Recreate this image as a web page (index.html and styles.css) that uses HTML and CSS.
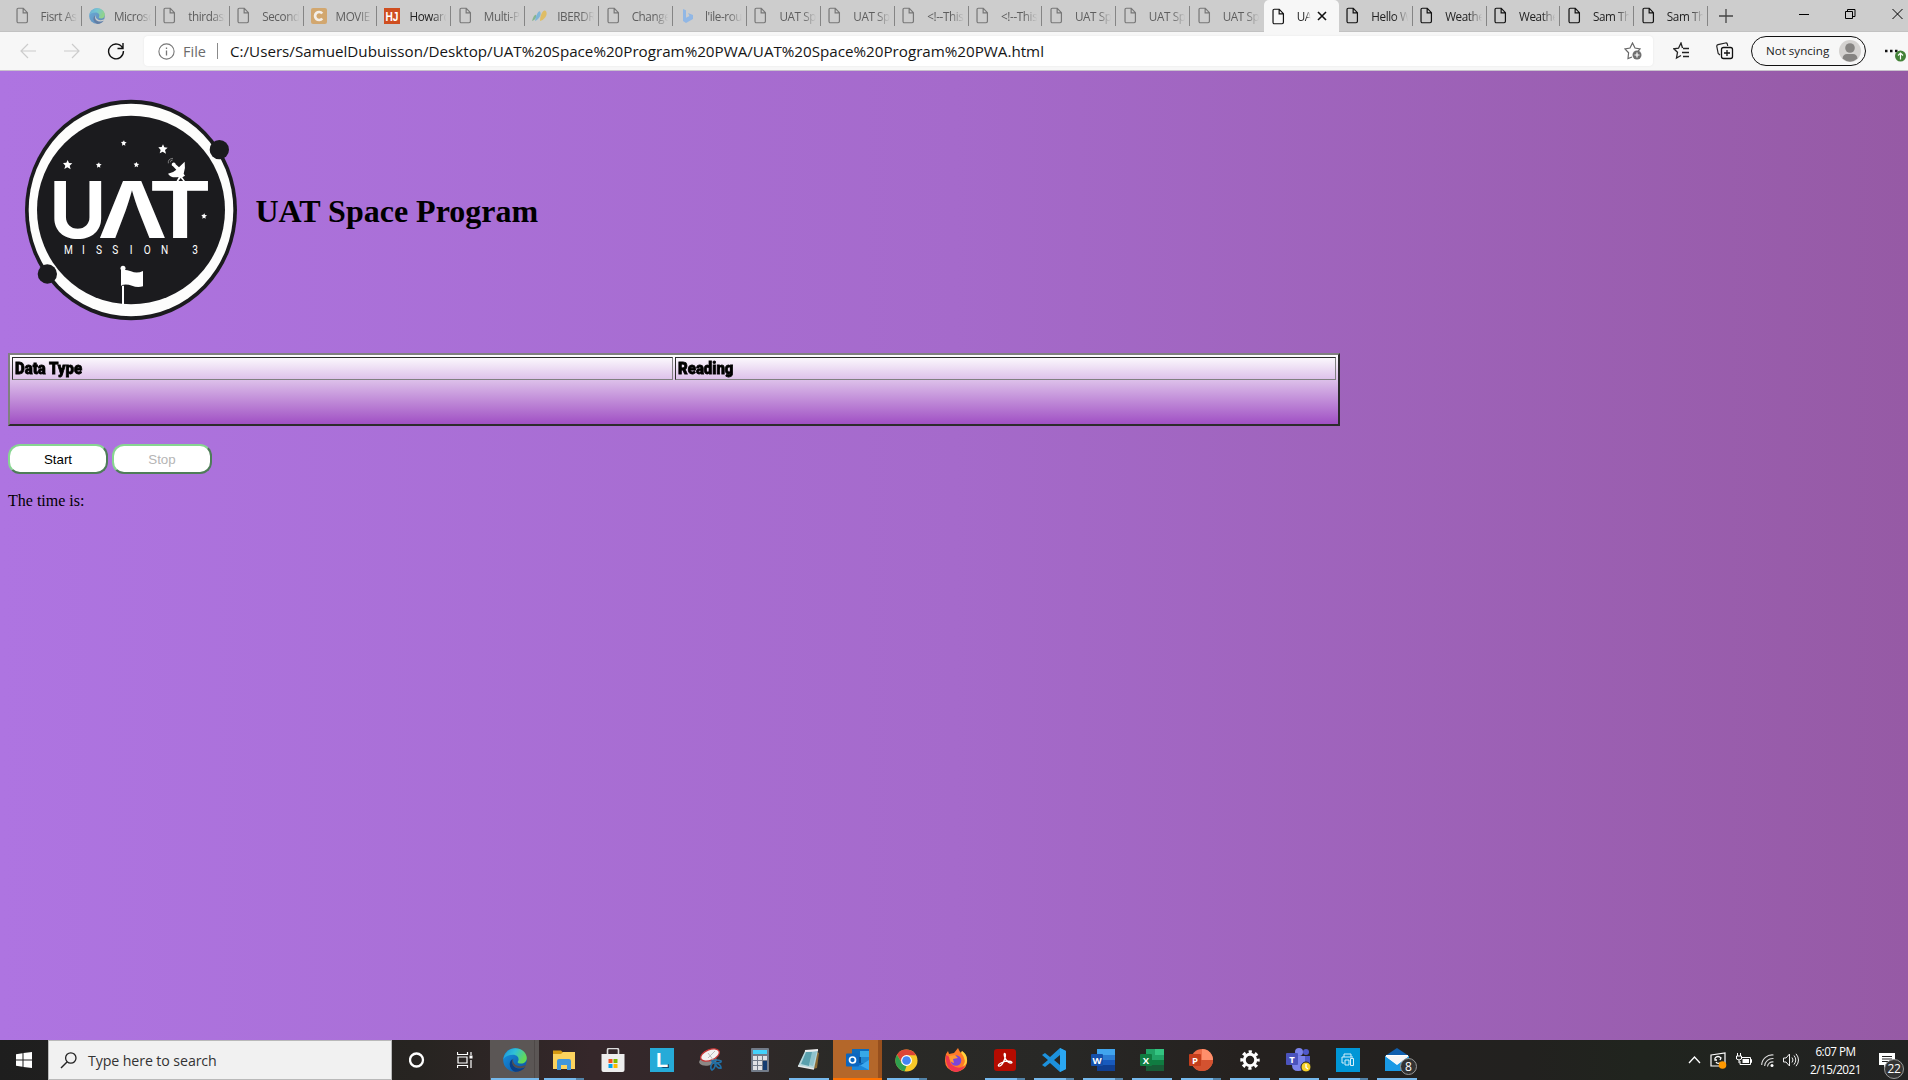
FILE: index.html
```html
<!DOCTYPE html>
<html lang="en">
<head>
<meta charset="utf-8">
<title>UAT Space Program</title>
<link rel="stylesheet" href="styles.css">
</head>
<body>
<svg class="defs" width="0" height="0">
  <defs>
    <symbol id="doc" viewBox="0 0 14 18"><path d="M2.500 1.200h5.300l4.500 4.700v9.400q0 1.500-1.500 1.500H2.600q-1.500 0-1.500-1.500V2.700q0-1.500 1.400-1.500zM7.700 1.400v4.800h4.500" fill="none" stroke="currentColor" stroke-width="1.300"/></symbol>
    <linearGradient id="edgeA" x1="0" y1="0" x2="1" y2=".4"><stop offset="0" stop-color="#1a8fdc"/><stop offset=".5" stop-color="#2fc0d8"/><stop offset="1" stop-color="#63d957"/></linearGradient>
    <linearGradient id="edgeB" x1="0" y1="0" x2="1" y2="1"><stop offset="0" stop-color="#1795e4"/><stop offset="1" stop-color="#0d509f"/></linearGradient>
    <symbol id="edge" viewBox="0 0 24 24">
      <circle cx="12" cy="12" r="11.800" fill="url(#edgeB)"/>
      <path d="M.3 11.500C1.300 4.500 6.300.2 12.200.2 19 .2 23.800 5.200 23.800 10c0 3.400-2.500 5.600-5.700 5.600-2.400 0-4-1-3.200-2 1.800-2.800 0-6.800-5-6.800-4.700 0-8.500 1.900-9.600 4.700z" fill="url(#edgeA)"/>
      <path d="M9.600 11c-1.400 5.500 2.500 10 7.800 9.600 2.300-.2 4.100-1 5-1.800-2.300 3.500-6.400 5.200-10.400 5C6.500 21.500 4.600 14 9.600 11z" fill="#0b3f86"/>
      <path d="M10.500 10.500c-1.600 3.500 1.500 7.700 7 7.700 2.600 0 4.500-1 5.300-1.400-.3 1-.8 1.800-1.300 2.400-5.500 2.300-12.300.3-12.400-5 0-1.500.6-2.800 1.400-3.700z" class="gap"/>
    </symbol>
  </defs>
</svg>

<header class="browser">
  <div class="tabs">
    <div class="tab dim"><svg class="fav"><use href="#doc"/></svg><span>Fisrt Assignment</span></div>
    <div class="tab dim"><svg class="fav sq faded"><use href="#edge"/></svg><span>Microsoft</span></div>
    <div class="tab dim"><svg class="fav"><use href="#doc"/></svg><span>thirdassign</span></div>
    <div class="tab dim"><svg class="fav"><use href="#doc"/></svg><span>Second Page</span></div>
    <div class="tab dim"><svg class="fav sq" viewBox="0 0 16 16"><rect width="16" height="16" rx="2" fill="#d2a76f"/><path d="M11.200 5.500A4 4 0 1 0 11.200 10.500" fill="none" stroke="#f3eee8" stroke-width="2.700"/></svg><span>MOVIE TIME</span></div>
    <div class="tab"><svg class="fav sq" viewBox="0 0 16 16"><rect width="16" height="16" fill="#cf4e20"/><text x="1.500" y="12.500" textLength="13" lengthAdjust="spacingAndGlyphs" class="hj">HJ</text></svg><span>Howard J</span></div>
    <div class="tab dim"><svg class="fav"><use href="#doc"/></svg><span>Multi-Platform</span></div>
    <div class="tab dim"><svg class="fav sq" viewBox="0 0 16 16"><path d="M0 13C1 9 3 6 4 7c1 2-1 5-4 6z" fill="#86b58f"/><path d="M3 13C4 6 7 2 8 3.500 10 7 7 11 3 13z" fill="#7eb6d8"/><path d="M8 13C8 7 11 2 13 2.500 17 5 13 12 8 13z" fill="#dfbd65"/></svg><span>IBERDROLA</span></div>
    <div class="tab dim"><svg class="fav"><use href="#doc"/></svg><span>Change log</span></div>
    <div class="tab dim"><svg class="fav sq" viewBox="0 0 16 16"><path d="M3 1l3 1.200v7.600L9.500 8 8 5l5 2v4l-7 4-3-2z" fill="#91b7e5"/></svg><span>l'ile-rousse</span></div>
    <div class="tab dim"><svg class="fav"><use href="#doc"/></svg><span>UAT Space</span></div>
    <div class="tab dim"><svg class="fav"><use href="#doc"/></svg><span>UAT Space</span></div>
    <div class="tab dim"><svg class="fav"><use href="#doc"/></svg><span>&lt;!--This is</span></div>
    <div class="tab dim"><svg class="fav"><use href="#doc"/></svg><span>&lt;!--This is</span></div>
    <div class="tab dim"><svg class="fav"><use href="#doc"/></svg><span>UAT Space</span></div>
    <div class="tab dim"><svg class="fav"><use href="#doc"/></svg><span>UAT Space</span></div>
    <div class="tab dim last"><svg class="fav"><use href="#doc"/></svg><span>UAT Space</span></div>
    <div class="tab active"><svg class="fav"><use href="#doc"/></svg><span>UAT</span><svg class="x" viewBox="0 0 10 10"><path d="M1 1l8 8M9 1L1 9" stroke="#111" stroke-width="1.600"/></svg></div>
    <div class="tab"><svg class="fav"><use href="#doc"/></svg><span>Hello World</span></div>
    <div class="tab"><svg class="fav"><use href="#doc"/></svg><span>Weather App</span></div>
    <div class="tab"><svg class="fav"><use href="#doc"/></svg><span>Weather App</span></div>
    <div class="tab"><svg class="fav"><use href="#doc"/></svg><span>Sam The</span></div>
    <div class="tab"><svg class="fav"><use href="#doc"/></svg><span>Sam The</span></div>
    <svg class="plus" viewBox="0 0 14 14"><path d="M7 0v14M0 7h14" stroke="#444" stroke-width="1.300"/></svg>
    <div class="window-buttons">
      <svg width="10" height="12" viewBox="0 0 10 12"><path d="M0 6.500h10" stroke="#000"/></svg>
      <svg width="11" height="12" viewBox="0 0 11 12"><path d="M.5 3.500h7v7h-7zM2.500 3.500v-2h7.500v7H7.500" fill="none" stroke="#000"/></svg>
      <svg width="11" height="12" viewBox="0 0 11 12"><path d="M.5 1l10 10M10.500 1l-10 10" stroke="#000"/></svg>
    </div>
  </div>
  <div class="toolbar">
    <div class="nav">
      <svg width="16" height="16" viewBox="0 0 16 16"><path d="M8 1L1 8l7 7M1 8h15" fill="none" stroke="#ccc" stroke-width="1.200"/></svg>
      <svg width="16" height="16" viewBox="0 0 16 16"><path d="M8 1l7 7-7 7M15 8H0" fill="none" stroke="#ccc" stroke-width="1.200"/></svg>
      <svg width="18" height="18" viewBox="0 0 18 18"><path d="M15.800 6.500A7.400 7.400 0 1 0 16.400 9M16 1v5.500h-5.500" fill="none" stroke="#111" stroke-width="1.400"/></svg>
    </div>
    <div class="address">
      <svg width="17" height="17" viewBox="0 0 17 17"><circle cx="8.500" cy="8.500" r="7.600" fill="none" stroke="#777" stroke-width="1.100"/><path d="M8.500 7.500v5M8.500 4.500v1.400" stroke="#777" stroke-width="1.300"/></svg>
      <span class="scheme">File</span><i></i>
      <span class="url">C:/Users/SamuelDubuisson/Desktop/UAT%20Space%20Program%20PWA/UAT%20Space%20Program%20PWA.html</span>
      <svg class="star" width="18" height="18" viewBox="0 0 18 18"><path d="M8 15l-4 1.500.600-5.700L1 7l5-1 2.500-5L11 6l5 1-2 2.300" fill="none" stroke="#666" stroke-width="1.200"/><circle cx="13" cy="13" r="4.500" fill="#707070"/><path d="M13 10.500v5M10.500 13h5" stroke="#fff" stroke-width="1.200"/></svg>
    </div>
    <div class="actions">
      <svg width="18" height="18" viewBox="0 0 18 18"><path d="M9.500 6L8 1 5.500 6.200.8 6.800 4.500 10.300 3.500 16 8 13.500M10 6.500h6M9 10.500h7M10 14.500h6" fill="none" stroke="#222" stroke-width="1.300"/></svg>
      <svg width="18" height="18" viewBox="0 0 18 18"><path d="M4 13L2.200 11.500.8 4.500Q.6 3 2 2.600L9.500 1q1.400-.2 1.800 1l.4 2" fill="none" stroke="#222" stroke-width="1.200"/><rect x="5.500" y="5.500" width="11" height="11" rx="2" fill="none" stroke="#111" stroke-width="1.300"/><path d="M11 8v6M8 11h6" stroke="#111" stroke-width="1.300"/></svg>
      <div class="profile"><span>Not syncing</span><svg width="22" height="22" viewBox="0 0 22 22"><circle cx="11" cy="11" r="11" fill="#d4d2d0"/><circle cx="11" cy="8" r="4.800" fill="#868482"/><path d="M3.500 18.500Q4 14 8 14h6q4 0 4.500 4.500Q11 25 3.500 18.500z" fill="#868482"/></svg></div>
      <svg class="more" width="22" height="22" viewBox="0 0 22 22"><path d="M0 11h2.500M5 11h2.500M10 11h2.500" stroke="#111" stroke-width="2.300"/><circle cx="15.500" cy="16" r="5.500" fill="#448238"/><path d="M15.500 19.500v-6.500M13 15.500l2.500-2.500 2.500 2.500" fill="none" stroke="#fff" stroke-width="1.200"/></svg>
    </div>
  </div>
</header>

<main>
  <div class="masthead">
    <svg class="logo" viewBox="0 0 666 690" width="222" height="230">
      <ellipse cx="333" cy="345" rx="318" ry="331" fill="#1b1b1e"/>
      <ellipse cx="333" cy="345" rx="307" ry="319" fill="#fdfdfc"/>
      <ellipse cx="333" cy="345" rx="282" ry="283" fill="#1b1b1e"/>
      <circle cx="598" cy="164" r="29" fill="#1b1b1e"/><circle cx="82" cy="537" r="29" fill="#1b1b1e"/>
      <g fill="#fff">
        <path id="st" d="M143 195l4 9 10 1-8 7 3 11-10-6-9 5 3-10-7-8 10-1z"/><use href="#st" x="286" y="-47"/>
        <path id="sm" d="M312 136l2 5 6 1-5 4 1 6-5-3-5 3 1-6-4-5 6-1z"/><use href="#sm" x="-75" y="66"/><use href="#sm" x="38" y="65"/><use href="#sm" x="241" y="219"/>
        <g class="mark"><text x="88" y="428" textLength="171" lengthAdjust="spacingAndGlyphs">U</text><text x="233" y="428" textLength="208" lengthAdjust="spacingAndGlyphs">Λ</text><text x="386" y="428" textLength="188" lengthAdjust="spacingAndGlyphs">T</text></g>
        <path d="M444 236q16-3 25-12l-10-10a6 6 0 1 1 8-6l10 9 17-17q3 20-3 36l4 6-8 5 10 14h-5l-10-12-9 12h-5l8-15q-24 4-32-10z"/>
        <path d="M445 205q-2-14 14-15M451 202q0-7 7-7" fill="none" stroke="#aaa" stroke-width="2"/>
        <g class="mission"><text x="132" y="478">M</text><text x="186" y="478">I</text><text x="228" y="478">S</text><text x="277" y="478">S</text><text x="329" y="478">I</text><text x="371" y="478">O</text><text x="423" y="478">N</text><text x="517" y="478">3</text></g>
        <circle cx="309" cy="520" r="7.500"/><path d="M303 525q16-2 30 4 18 8 36-1v46q-17 5-33-2-16-6-31-2l1 2h6v55h-6v-55h-3z"/>
      </g>
    </svg>
    <h1>UAT Space Program</h1>
  </div>
  <div class="readings"><div class="cell"><b>Data Type</b></div><div class="cell"><b>Reading</b></div></div>
  <div class="buttons"><button>Start</button><button disabled>Stop</button></div>
  <p>The time is:</p>
</main>

<footer class="taskbar">
  <div class="start"><svg width="16" height="16" viewBox="0 0 16 16"><path d="M0 2.200L6.500 1.300v6.200H0zM7.500 1.100L16 0v7.500H7.500zM0 8.500h6.500v6.200L0 13.800zM7.500 8.500H16V16l-8.500-1.100z" fill="#fff"/></svg></div>
  <div class="search"><svg width="17" height="17" viewBox="0 0 17 17"><circle cx="10.800" cy="6" r="5.200" fill="none" stroke="#222" stroke-width="1.300"/><path d="M7 10L1 16" stroke="#222" stroke-width="1.400"/></svg><span>Type here to search</span></div>
  <div class="app"><svg width="16" height="16" viewBox="0 0 16 16"><circle cx="7.500" cy="8" r="6.500" fill="none" stroke="#fff" stroke-width="2.300"/></svg></div>
  <div class="app"><svg width="17" height="16" viewBox="0 0 17 16"><path d="M.5 0v2.500h10V0M.5 16v-2.500h10V16M1 5h9v6H1zM14 0v3M14 8v8" fill="none" stroke="#fff" stroke-width="1.200"/><path d="M12.500 3.500h3v3h-3z" fill="#fff"/></svg></div>
  <div class="app focus run many"><svg width="24" height="24"><use href="#edge"/></svg></div>
  <div class="app run many"><svg width="24" height="22" viewBox="0 0 24 22"><path d="M1 1.500h8l2 2h11v3H1z" fill="#d69a12"/><path d="M1 5h8l2-2h12v17H1z" fill="#fbd35e"/><path d="M5 21v-9q0-2 2-2h10q2 0 2 2v9h-4v-5H9v5z" fill="#3f96dc"/></svg></div>
  <div class="app"><svg width="24" height="24" viewBox="0 0 24 24"><path d="M6.500 8V2q0-1.500 1.500-1.500h8q1.500 0 1.500 1.500v6" fill="none" stroke="#ddd" stroke-width="1.600"/><path d="M.5 6h23v16q0 2-2 2h-19q-2 0-2-2z" fill="#eee"/><path d="M7.500 11h4v4h-4z" fill="#f25022"/><path d="M12.500 11h4v4h-4z" fill="#7fba00"/><path d="M7.500 16h4v4h-4z" fill="#00a4ef"/><path d="M12.500 16h4v4h-4z" fill="#ffb900"/></svg></div>
  <div class="app"><svg width="24" height="24" viewBox="0 0 24 24"><rect width="24" height="24" fill="#26abd8"/><path d="M7 4L5 20h6l8-4v4H5z" fill="#134b73"/><text x="6" y="19" class="ell">L</text></svg></div>
  <div class="app"><svg width="24" height="24" viewBox="0 0 24 24"><ellipse cx="9" cy="13" rx="9" ry="4.500" transform="rotate(-10 9 13)" fill="#8b8886"/><ellipse cx="11" cy="7" rx="9.800" ry="5.300" transform="rotate(-22 11 7)" fill="#f3f1f1" stroke="#c73434" stroke-width="1.300"/><path d="M9 10l7-7M9 5l6 8" stroke="#bbb"/><path d="M13 13q5-2 9 0 1 2-7 2zM14 14q-4 6-1 8 4-2 3-8zM16 15q6 1 6 5-4 1-6-5z" fill="none" stroke="#216fa5" stroke-width="1.700"/></svg></div>
  <div class="app"><svg width="18" height="24" viewBox="0 0 18 24"><rect width="18" height="24" rx="1" fill="#727b88"/><path d="M2 2h14v4H2z" fill="#43d1fa"/><path d="M2 8h4v4H2zM7 8h4v4H7zM12 8h4v4h-4zM2 13h4v4H2zM7 13h4v4H7zM2 18h4v4H2zM7 18h4v4H7z" fill="#e0e2e5"/><path d="M12 13h4v9h-4z" fill="#123c71"/></svg></div>
  <div class="app run"><svg width="24" height="24" viewBox="0 0 24 24"><path d="M20 4l2 1-2 15-4 1z" fill="#8a6a34"/><path d="M8 3l13-1-4 19L1 18z" fill="#b7d7dc"/><path d="M9 4h7l-4 14-8-2z" fill="#5aa0ad"/><path d="M15 4l5-1-4 15-4-1z" fill="#8fc3cc"/><path d="M8 3l13-1" stroke="#eee" stroke-width="2"/><path d="M1 18l16 3" stroke="#e8e8e8" stroke-width="1.500"/></svg></div>
  <div class="app alert"><svg width="24" height="24" viewBox="0 0 24 24"><path d="M6 1h17v20H6z" fill="#0d6bbd"/><path d="M14 3h9v6h-9z" fill="#36a8e8"/><path d="M7 9h8v6H7z" fill="#0a4f94"/><path d="M15 9h8v6h-8z" fill="#1f87d2"/><path d="M6 22l9-5 8-5v10z" fill="#3ba8ef"/><path d="M6 13l17 9H6z" fill="#1c86d8"/><rect y="5.500" width="13" height="13" rx="1" fill="#0b66c0"/><circle cx="6.500" cy="12" r="3" fill="none" stroke="#fff" stroke-width="1.700"/></svg></div>
  <div class="app run many"><svg width="23" height="23" viewBox="0 0 24 24"><circle cx="12" cy="12" r="11.500" fill="#f7c928"/><path d="M2 6A11.500 11.500 0 0 1 22 6.500H12L7 14z" fill="#dc4437"/><path d="M2 6l5.500 9 4.500 3-2 5.300A11.500 11.500 0 0 1 2 6z" fill="#2fa04f"/><circle cx="12" cy="12" r="5.700" fill="#fff"/><circle cx="12" cy="12" r="4.500" fill="#4285f4"/></svg></div>
  <div class="app"><svg width="24" height="24" viewBox="0 0 24 24"><path d="M2 6l2-3 1 3 5-1L14 0q1 3 3 5l1-2q6 5 5 12-2 8-11 9Q1 22 1 13q0-4 1-7z" fill="#ff7a28"/><path d="M14 0q1 3 4 6 5 7 1 12 4-1 4-6 0-6-5-9l-1 2q-2-2-3-5z" fill="#ffd23d"/><path d="M2 7Q1 22 12 24q6-1 9-6-7 4-13-1-4-4-1-7z" fill="#f0364f"/><circle cx="12" cy="12.500" r="5.300" fill="#7b45d8"/><path d="M5 8l6-1 3 3-5 1 1 4q-5-1-5-7z" fill="#ff9a31"/></svg></div>
  <div class="app run many"><svg width="22" height="22" viewBox="0 0 22 22"><rect width="22" height="22" rx="3" fill="#b40b00"/><path d="M4.500 17q-1-1.500 3.500-3.500t9-1q2 1 0 1.600-3 0-6-5-1.500-4.500-.3-4.700 1.600.5 0 5.700-3 8-6.200 6.900z" fill="none" stroke="#fff" stroke-width="1.300"/></svg></div>
  <div class="app run many"><svg width="24" height="24" viewBox="0 0 24 24"><path d="M18 0l6 3v18l-6 3L8 15l-5 4-3-2 6-5-6-5 3-2 5 4zM18 7l-6 5 6 5z" fill="#1d91dc" fill-rule="evenodd"/><path d="M18 0l6 3v18l-6 3z" fill="#2aa7f2"/></svg></div>
  <div class="app run many"><svg width="24" height="22" viewBox="0 0 24 22"><path d="M6 0h18v22H6z" fill="#2b7cd3"/><path d="M6 0h18v6H6z" fill="#41a5ee"/><path d="M6 11h18v11H6z" fill="#185abd"/><path d="M6 16h18v6H6z" fill="#103f91"/><rect y="5" width="12" height="12" rx="1" fill="#1550aa"/><text x="6" y="14.500" class="tile">W</text></svg></div>
  <div class="app run"><svg width="24" height="22" viewBox="0 0 24 22"><path d="M6 0h18v22H6z" fill="#21a366"/><path d="M15 0h9v6h-9z" fill="#33c481"/><path d="M6 11h18v11H6z" fill="#107c41"/><path d="M6 16h18v6H6z" fill="#185c37"/><rect y="5" width="12" height="12" rx="1" fill="#107c41"/><text x="6" y="14.500" class="tile">X</text></svg></div>
  <div class="app run many"><svg width="24" height="22" viewBox="0 0 24 22"><circle cx="13" cy="11" r="11" fill="#ed6c47"/><path d="M13 0a11 11 0 0 1 11 11H13z" fill="#ff8f6b"/><path d="M2 11h22a11 11 0 0 1-22 0z" fill="#d35230"/><rect y="5" width="12" height="12" rx="1" fill="#c43e1c"/><text x="6" y="14.500" class="tile">P</text></svg></div>
  <div class="app run"><svg width="20" height="20" viewBox="0 0 20 20"><circle cx="10" cy="10" r="5.700" fill="none" stroke="#fff" stroke-width="3"/><circle cx="10" cy="10" r="8.200" fill="none" stroke="#fff" stroke-width="3" stroke-dasharray="3.200 3.240" stroke-dashoffset="1.600"/></svg></div>
  <div class="app run"><svg width="25" height="24" viewBox="0 0 25 24"><circle cx="20" cy="4" r="3" fill="#5059c9"/><circle cx="13" cy="4" r="4" fill="#7b83eb"/><path d="M15 8h9v8q-2 5-7 3z" fill="#5059c9"/><path d="M6 8h13v9q-1 6-7 6t-6-6z" fill="#7b83eb"/><rect y="5" width="12" height="12" rx="1" fill="#4b53bc"/><text x="6" y="14.500" class="tile">T</text><circle cx="20" cy="19" r="5" fill="#f8d22a" stroke="#222"/><path d="M20 16v3.500l2 1.500" fill="none" stroke="#fff" stroke-width="1.300"/></svg></div>
  <div class="app run many"><svg width="24" height="24" viewBox="0 0 24 24"><rect width="24" height="24" fill="#0096d6"/><path d="M8 9V6h7v3M8 15H6V9h11M9 12h4v5H9zM14.500 10.500h3v7h-3z" fill="none" stroke="#d8f0fa"/></svg></div>
  <div class="app run mail"><svg width="24" height="24" viewBox="0 0 24 24"><path d="M0 8l12-8 12 8v15H0z" fill="#0f5fae"/><path d="M1 7h22v6l-11 6L1 11z" fill="#fff"/><path d="M0 8l12 9L24 8v15H0z" fill="#1999e5"/><path d="M0 8l12 8 12-8" fill="#f6f6f6"/></svg><em>8</em></div>
  <div class="tray">
    <svg width="13" height="8" viewBox="0 0 13 8"><path d="M1 7l5.500-6L12 7" fill="none" stroke="#fff" stroke-width="1.300"/></svg>
    <svg width="17" height="17" viewBox="0 0 17 17"><path d="M1 3l14-2v13H1z" fill="none" stroke="#fff" stroke-width="1.200"/><path d="M5 6q3-3 6 0l-1 2M5 6v2h2M10 11q-3 1-4-1" fill="none" stroke="#fff" stroke-width="1.300"/><circle cx="12.500" cy="13" r="3.800" fill="#f90"/></svg>
    <svg width="16" height="14" viewBox="0 0 16 14"><path d="M5 4.500h9.500v7H4V8M14.500 6.500h1v3h-1M1.500 0v3M4.500 0v3M.5 3h5v3q-2.500 2-5 0zM3 7v3" fill="none" stroke="#fff"/><path d="M6.500 6h6.500v4H6.500z" fill="#fff"/></svg>
    <svg width="13" height="13" viewBox="0 0 13 13"><path d="M.7 11A10.500 10.500 0 0 1 12.500 1M3.600 12A8 8 0 0 1 12.500 4.500M6.500 12.500A5 5 0 0 1 12.500 8" fill="none" stroke="#ddd" stroke-width="1.100"/><circle cx="11" cy="11.500" r="1.500" fill="#fff"/></svg>
    <svg width="16" height="14" viewBox="0 0 16 14"><path d="M.5 5h2.500l3.500-4v12L3 9H.5zM9 4.500q2 2.500 0 5M11 2.500q3.500 4.500 0 9M13 .8q5 6.200 0 12.400" fill="none" stroke="#eee"/></svg>
    <div class="clock"><span>6:07 PM</span><span>2/15/2021</span></div>
    <div class="notes"><svg width="16" height="15" viewBox="0 0 16 15"><path d="M0 0h16v12H8l-3 3v-3H0z" fill="#fff"/><path d="M3 3.500h10M3 6h10M3 8.500h10" stroke="#222"/></svg><em>22</em></div>
  </div>
</footer>
</body>
</html>
```
FILE: styles.css
```css
* { box-sizing: border-box; }
body { margin: 0; height: 1080px; overflow: hidden; display: flex; flex-direction: column; font-family: "Open Sans", "Noto Sans", sans-serif; }
svg { display: block; flex: none; }
.defs { position: absolute; }
.gap { fill: var(--gap, #cdcdcd); }

.browser { height: 71px; background: #f7f7f7; border-bottom: 1px solid #c9c2cd; }
.tabs { height: 32px; background: #cdcdcd; border-bottom: 1px solid #c2c2c2; display: flex; align-items: center; padding-left: 8px; }
.tab { width: 73.9px; flex: none; height: 20px; padding: 0 3px 0 7.5px; border-right: 1px solid #858585; display: flex; align-items: center; color: #222; font-size: 11.7px; }
.tab.dim { color: #5e5e5e; }
.tab.last { border-color: transparent; width: 73.500px; }
.fav { width: 13px; height: 17px; margin-right: 12px; color: #111; }
.dim .fav { color: #777; }
.fav.sq { width: 16px; height: 16px; margin: 0 9px 0 -.500px; }
.faded { opacity: .55; }
.hj { font: 700 12px "Liberation Sans", sans-serif; fill: #fff; }
.tab span { flex: 1; overflow: hidden; white-space: nowrap; letter-spacing: -.4px; mask-image: linear-gradient(90deg, #000 62%, transparent 98%); }
.tab.active { height: 32px; width: 75px; background: #f7f7f7; border: 0; border-radius: 5px 5px 0 0; margin-bottom: -1px; padding: 0 12px 0 8px; }
.tab.active span { flex: none; width: 14px; }
.tab.active .x { width: 10px; height: 10px; margin-left: auto; }
.plus { width: 14px; height: 14px; margin-left: 11px; }
.window-buttons { margin-left: auto; display: flex; gap: 36px; padding: 0 5px 4px 0; }

.toolbar { height: 38px; display: flex; align-items: center; }
.nav { width: 144px; padding-left: 20px; display: flex; align-items: center; }
.nav svg + svg { margin-left: 28px; }
.nav svg + svg + svg { margin-left: 27px; }
.address { width: 1509px; height: 30px; background: #fff; border-radius: 4px; display: flex; align-items: center; padding: 0 11px 0 14px; box-shadow: 0 0 2px #e4e4e4; }
.scheme { margin-left: 8px; width: 26px; font-size: 14.5px; color: #6b6b6b; }
.address i { width: 1px; height: 16px; background: #8a8a8a; margin: 0 12px 0 8px; }
.url { font-size: 15.18px; color: #151515; white-space: nowrap; }
.star { margin-left: auto; }
.actions { flex: 1; display: flex; align-items: center; padding-left: 20px; }
.actions svg + svg { margin-left: 25px; }
.profile { width: 115px; height: 30px; margin-left: 17px; border: 1.5px solid #111; border-radius: 15px; display: flex; align-items: center; justify-content: space-between; padding: 0 4px 1px 14px; font-size: 11.6px; color: #222; white-space: nowrap; }
.actions .more { margin-left: 19px; }

main { flex: 1; background: linear-gradient(90deg, #ae74e1, #a56acb 50%, #965aa5); padding: 24px 8px 0; font-family: "Liberation Serif", serif; color: #000; }
.masthead { display: flex; align-items: center; height: 230px; padding-left: 12px; }
h1 { margin: 2px 0 0 13.500px; font-size: 32px; line-height: 36px; }
.mark { font: 700 234px Inter, sans-serif; }
.mission { font: 400 39px Roboto, sans-serif; }
.mission text { transform-box: fill-box; transform: scaleX(.78); }
.readings { margin-top: 28px; width: 1332px; height: 73px; border: 2px solid; border-color: #808080 #2c2c2c #2c2c2c #808080; background: linear-gradient(#fff, #a050c4); padding: 2px; display: grid; grid-template-columns: 1fr 1fr; gap: 2px; align-items: start; }
.cell { height: 23px; border: 1px solid; border-color: #2c2c2c #808080 #808080 #2c2c2c; padding: 0 2px; line-height: 20px; }
.cell b { display: inline-block; font: 900 17px/20px Roboto, sans-serif; transform: scaleX(.88); transform-origin: 0 50%; -webkit-text-stroke: .8px #000; }
.buttons { margin-top: 18px; display: flex; gap: 4px; }
button { width: 100px; height: 30px; padding: 0; border: 2px solid; border-color: #87d591 #4e7d58 #4e7d58 #87d591; border-radius: 12px; background: #fff; color: #000; font: 13.33px "Liberation Sans", sans-serif; }
button:disabled { color: #b5b5b5; }
p { margin: 18px 0 0; font-size: 16px; line-height: 18px; }

.taskbar { height: 40px; display: flex; background: linear-gradient(90deg, #1e1e1e, #272421 22%, #35272a 31%, #33282a 36%, #2a2a27 44%, #282826 55%, #25211f 65%, #22211f 80%, #20241e 86%, #222 100%); color: #fff; }
.start { width: 48px; display: grid; place-items: center; }
.search { width: 344px; background: #f1f1f1; border: 1px solid #b9b9b9; display: flex; align-items: center; padding-left: 11px; gap: 11px; color: #333; font-size: 14.2px; letter-spacing: -.1px; }
.app { width: 49px; position: relative; display: grid; place-items: center; border-bottom: 2px solid transparent; }
.app > svg { margin-top: 2px; }
.focus { --gap: #554f4e; background: linear-gradient(90deg, #5b5655 44px, #413b3a 44px, #5b5655 45px); }
.run::after { content: ""; position: absolute; left: 4.5px; right: 4.5px; bottom: -2px; height: 2px; background: #76b9ed; }
.many::after { background: linear-gradient(90deg, #76b9ed 32px, #5283a8 32px); }
.focus::after { left: 1px; right: 0; background: #76b9ed; }
.alert { background: linear-gradient(90deg, #b4672a 45px, #964f1d 45px); border-color: #ff7200; }
.ell { font: 700 20px "Liberation Sans", sans-serif; fill: #fff; }
.tile { font: 700 9.5px "Open Sans", sans-serif; fill: #fff; text-anchor: middle; }
em { position: absolute; width: 20px; height: 20px; border-radius: 50%; border: 1px solid #999; background: #333; color: #fff; font: 12px/18px "Open Sans", sans-serif; text-align: center; }
.mail em { left: 28px; top: 18px; width: 17px; height: 17px; line-height: 15px; font-size: 12px; }
.tray { margin-left: auto; display: flex; align-items: center; padding-right: 13px; }
.tray > svg + svg { margin-left: 9px; }
.clock { width: 57px; margin: -1px 15px 0 8px; display: flex; flex-direction: column; text-align: center; font-size: 11.7px; line-height: 18px; letter-spacing: -.5px; white-space: nowrap; }
.notes { position: relative; }
.notes em { left: 5px; top: 6px; letter-spacing: -.4px; }
```
